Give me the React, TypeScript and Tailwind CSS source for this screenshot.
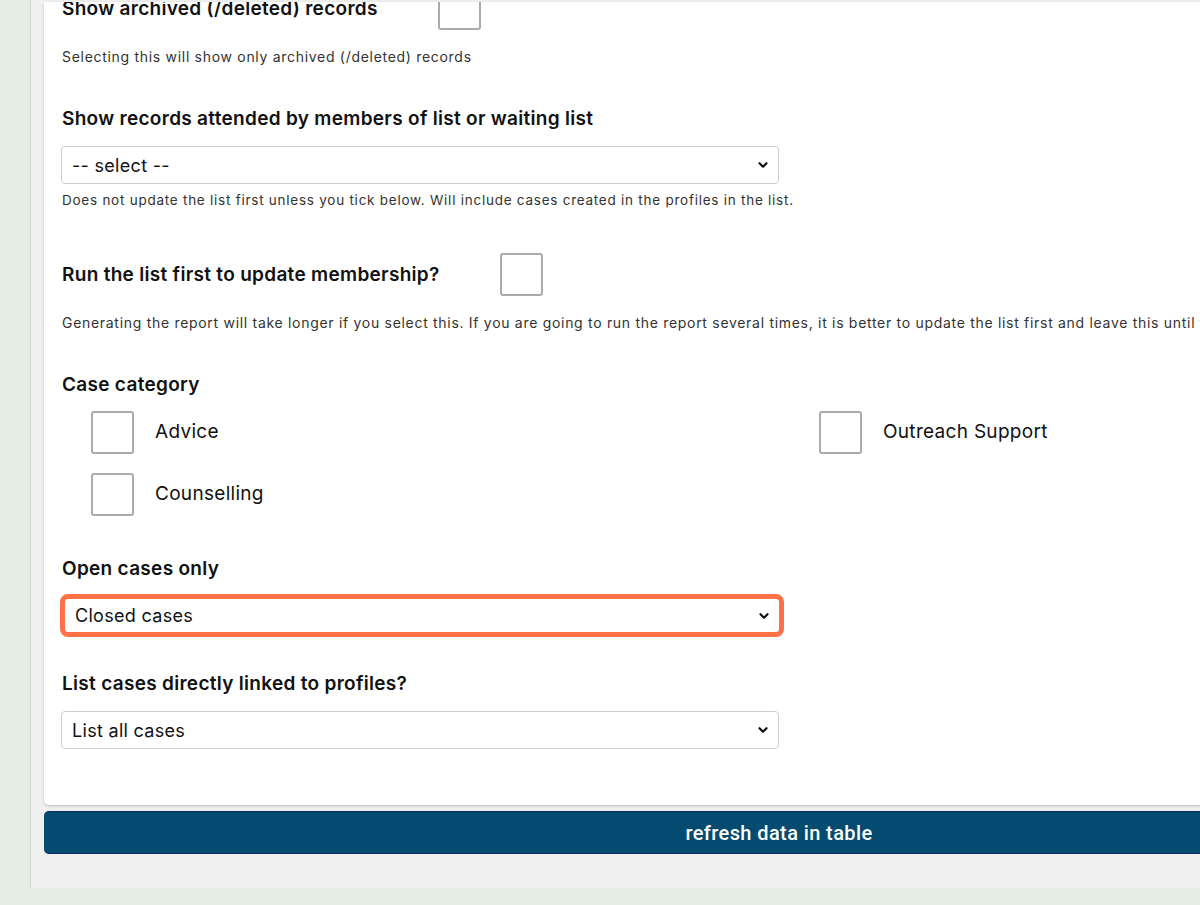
import React from "react";

const Chevron = () => (
  <svg
    className="pointer-events-none absolute right-[10px] top-1/2 h-[10px] w-[10px] -translate-y-1/2"
    viewBox="0 0 10 10"
    fill="none"
  >
    <path d="M1.5 3.2L5 6.7L8.5 3.2" stroke="#111" strokeWidth="2.2" strokeLinecap="round" strokeLinejoin="round" />
  </svg>
);

const Box = () => (
  <div className="h-[43px] w-[43px] shrink-0 rounded-[3px] border-2 border-[#ababab] bg-white" />
);

const Select = ({ value, highlight }: { value: string; highlight?: boolean }) => (
  <div
    className={
      highlight
        ? "relative h-[43px] w-[724px] -ml-[2px] rounded-[8px] border-[5px] border-[#ff7245] bg-white"
        : "relative h-[38px] w-[718px] -ml-[1px] rounded-[4px] border border-[#cfcfcf] bg-white"
    }
  >
    <div className="flex h-full items-center pl-[10px] text-[18px] tracking-[0.3px] text-[#111]">{value}</div>
    <Chevron />
  </div>
);

export default function App() {
  return (
    <div className="h-[905px] w-[1200px] overflow-hidden bg-[#e3ede2] font-['Inter',sans-serif]">
      {/* grey page area */}
      <div className="ml-[30px] h-[888px] w-[1540px] border-l border-[#d4d4d4] bg-[#f0f0f0] pl-[13px] pt-[2px]">
        {/* white filter card */}
        <div className="w-[1480px] overflow-hidden rounded-b-[5px] bg-white pb-[56px] pl-[18px] shadow-[0_1px_3px_rgba(0,0,0,0.22)]">
          <div className="-mt-[15px] flex items-center gap-[60px]">
            <h3 className="text-[19px] font-semibold leading-[26px] tracking-[0.3px] text-[#111]">Show archived (/deleted) records</h3>
            <Box />
          </div>
          <p className="mt-[17px] text-[14px] leading-[20px] tracking-[0.7px] text-[#333]">
            Selecting this will show only archived (/deleted) records
          </p>

          <h3 className="mt-[39px] text-[19px] font-semibold leading-[26px] tracking-[0.3px] text-[#111]">
            Show records attended by members of list or waiting list
          </h3>
          <div className="mt-[14px]">
            <Select value="-- select --" />
          </div>
          <p className="mt-[7px] whitespace-nowrap text-[13.5px] leading-[18px] tracking-[0.75px] text-[#333]">
            Does not update the list first unless you tick below. Will include cases created in the profiles in the list.
          </p>

          <div className="mt-[44px] flex items-center gap-[60px]">
            <h3 className="text-[19px] font-semibold leading-[26px] tracking-[0.3px] text-[#111]">Run the list first to update membership?</h3>
            <Box />
          </div>
          <p className="mt-[17px] whitespace-nowrap text-[14px] leading-[20px] tracking-[0.7px] text-[#333]">
            Generating the report will take longer if you select this. If you are going to run the report several times, it is better to update the list first and leave this until the final run.
          </p>

          <h3 className="mt-[39px] text-[19px] font-semibold leading-[26px] tracking-[0.3px] text-[#111]">Case category</h3>
          <div className="mt-[13px] grid grid-cols-[728px_728px] gap-y-[19px] pl-[29px]">
            <label className="flex items-center gap-[21px] text-[19px] tracking-[0.3px] text-[#111]">
              <Box />
              Advice
            </label>
            <label className="flex items-center gap-[21px] text-[19px] tracking-[0.3px] text-[#111]">
              <Box />
              Outreach Support
            </label>
            <label className="flex items-center gap-[21px] text-[19px] tracking-[0.3px] text-[#111]">
              <Box />
              Counselling
            </label>
          </div>

          <h3 className="mt-[40px] text-[19px] font-semibold leading-[26px] tracking-[0.3px] text-[#111]">Open cases only</h3>
          <div className="mt-[12px]">
            <Select value="Closed cases" highlight />
          </div>

          <h3 className="mt-[34px] text-[19px] font-semibold leading-[26px] tracking-[0.3px] text-[#111]">
            List cases directly linked to profiles?
          </h3>
          <div className="mt-[14px]">
            <Select value="List all cases" />
          </div>
        </div>

        <button className="mt-[6px] flex h-[43px] w-[1470px] items-center justify-center rounded-[5px] border-y border-[#0b2d5c] bg-[#034b70] font-['Roboto',sans-serif] text-[20px] font-medium tracking-[0.4px] text-white">
          refresh data in table
        </button>
      </div>
    </div>
  );
}
